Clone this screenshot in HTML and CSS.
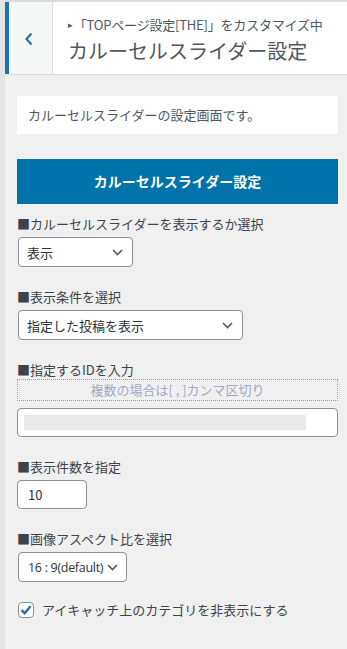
FILE: index.html
```html
<!DOCTYPE html>
<html lang="ja">
<head>
    <meta charset="UTF-8">
    <meta name="viewport" content="width=device-width, initial-scale=1.0">
    <title>カルーセルスライダー設定</title>
    <link rel="stylesheet" href="styles.css">
</head>
<body>
<div class="panel">

    <div class="section-title">
        <button class="back" type="button" aria-label="戻る">
            <svg width="10" height="14" viewBox="0 0 10 14"><path d="M7.5 1.5 L2.5 7 L7.5 12.5" fill="none" stroke="#2271b1" stroke-width="2.2"/></svg>
        </button>
        <div class="title-text">
            <span class="action"><span class="arrow">▸</span>「TOPページ設定[THE]」をカスタマイズ中</span>
            <h3>カルーセルスライダー設定</h3>
        </div>
    </div>

    <div class="content">
        <p class="description">カルーセルスライダーの設定画面です。</p>

        <div class="heading">カルーセルスライダー設定</div>

        <label class="field-label">■カルーセルスライダーを表示するか選択</label>
        <div class="select select-show">
            <span>表示</span>
            <svg width="11" height="7" viewBox="0 0 11 7"><path d="M1 1 L5.5 5.5 L10 1" fill="none" stroke="#50575e" stroke-width="1.6"/></svg>
        </div>

        <label class="field-label">■表示条件を選択</label>
        <div class="select select-cond">
            <span>指定した投稿を表示</span>
            <svg width="11" height="7" viewBox="0 0 11 7"><path d="M1 1 L5.5 5.5 L10 1" fill="none" stroke="#50575e" stroke-width="1.6"/></svg>
        </div>

        <label class="field-label">■指定するIDを入力</label>
        <div class="note">複数の場合は[ , ]カンマ区切り</div>
        <div class="text-input">
            <span class="blurred"></span>
        </div>

        <label class="field-label">■表示件数を指定</label>
        <div class="number-input">10</div>

        <label class="field-label">■画像アスペクト比を選択</label>
        <div class="select select-ratio">
            <span class="latin">16 : 9(default)</span>
            <svg width="11" height="7" viewBox="0 0 11 7"><path d="M1 1 L5.5 5.5 L10 1" fill="none" stroke="#50575e" stroke-width="1.6"/></svg>
        </div>

        <label class="checkbox-row">
            <span class="checkbox">
                <svg width="14" height="14" viewBox="0 0 14 14"><path d="M2.5 7.2 L5.6 10.2 L11.5 3.2" fill="none" stroke="#2271b1" stroke-width="2.4"/></svg>
            </span>
            アイキャッチ上のカテゴリを非表示にする
        </label>
    </div>

</div>
</body>
</html>
```

FILE: styles.css
```css
body {
    margin: 0;
    background-color: #f0f0f1;
    font-family: "Noto Sans CJK JP", "Noto Sans", sans-serif;
    color: #3c434a;
}
.panel {
    border-left: 5px solid #e4e4e4;
    min-height: 649px;
    box-sizing: border-box;
}
.section-title {
    display: flex;
    height: 75px;
    border-top: 2px solid #dcdcde;
    border-bottom: 1px solid #dcdcde;
    background-color: #fff;
    box-sizing: border-box;
}
.back {
    width: 48px;
    padding: 0;
    background-color: #f6f7f7;
    border: none;
    border-left: 4px solid #2271b1;
    border-right: 1px solid #dcdcde;
    display: flex;
    align-items: center;
    justify-content: center;
    padding-right: 4px;
    padding-top: 2px;
}
.title-text {
    padding-left: 15px;
    padding-top: 14px;
}
.action {
    display: block;
    font-size: 13px;
    line-height: 18px;
    color: #50575e;
    letter-spacing: -0.2px;
}
.arrow {
    font-size: 9px;
    margin-right: 1px;
    vertical-align: 2px;
}
h3 {
    margin: 3px 0 0;
    font-size: 20px;
    font-weight: 400;
    line-height: 28px;
    color: #50575e;
}
.content {
    padding: 21px 9px 0 12px;
}
.description {
    margin: 0;
    height: 38px;
    line-height: 38px;
    padding: 0 11px;
    background-color: #fff;
    font-size: 13px;
    color: #50575e;
}
.heading {
    margin-top: 25px;
    height: 45px;
    line-height: 45px;
    background-color: #0073aa;
    color: #fff;
    font-size: 14px;
    font-weight: bold;
    text-align: center;
}
.field-label {
    display: block;
    margin-top: 21px;
    font-size: 13px;
    line-height: 18px;
    color: #3c434a;
}
.heading + .field-label {
    margin-top: 11px;
}
.select {
    display: flex;
    align-items: center;
    justify-content: space-between;
    height: 30px;
    margin-top: 4px;
    margin-left: 1px;
    padding: 0 9px 0 8px;
    background-color: #fff;
    border: 1px solid #8c8f94;
    border-radius: 4px;
    box-sizing: border-box;
    font-size: 13px;
    color: #2c3338;
    white-space: nowrap;
}
.select svg {
    margin-top: 1px;
    flex-shrink: 0;
}
.select-show {
    width: 115px;
}
.select-cond {
    width: 225px;
}
.select-ratio {
    width: 109px;
    padding-left: 9px;
    padding-right: 8px;
}
.latin {
    font-family: "Open Sans", "Noto Sans", sans-serif;
    font-size: 12.5px;
    letter-spacing: -0.3px;
}
.note {
    height: 22px;
    line-height: 20px;
    border: 1px dotted #8e9ab3;
    box-sizing: border-box;
    font-size: 13px;
    color: #a3a8c2;
    text-align: center;
}
.text-input {
    margin-top: 7px;
    height: 29px;
    padding: 0 6px;
    display: flex;
    align-items: center;
    background-color: #fff;
    border: 1px solid #8c8f94;
    border-radius: 4px;
    box-sizing: border-box;
}
.blurred {
    display: block;
    width: 282px;
    height: 15px;
    background-color: #e9e9ea;
}
.number-input {
    margin-top: 4px;
    width: 70px;
    height: 29px;
    line-height: 27px;
    padding-left: 10px;
    background-color: #fff;
    border: 1px solid #8c8f94;
    border-radius: 4px;
    box-sizing: border-box;
    font-size: 13px;
    color: #2c3338;
}
.checkbox-row {
    display: flex;
    align-items: center;
    gap: 8px;
    margin-top: 18px;
    margin-left: 1px;
    font-size: 13px;
    color: #3c434a;
}
.checkbox {
    display: flex;
    align-items: center;
    justify-content: center;
    width: 16px;
    height: 16px;
    background-color: #fff;
    border: 1px solid #8c8f94;
    border-radius: 4px;
    box-sizing: border-box;
}
```
